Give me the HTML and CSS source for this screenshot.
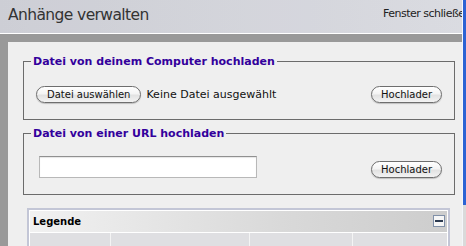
FILE: index.html
```html
<!DOCTYPE html>
<html lang="de">
<head>
<meta charset="utf-8">
<title>Anhänge verwalten</title>
<link rel="stylesheet" href="styles.css">
</head>
<body>
<div class="screen">
  <div class="window">
    <header class="titlebar">
      <h1 class="title">Anhänge verwalten</h1>
      <a class="close" href="#">Fenster schließen</a>
    </header>
    <div class="toolbar"></div>
    <div class="main">
      <div class="rail"></div>
      <div class="content">
        <fieldset class="group group-computer">
          <legend>Datei von deinem Computer hochladen</legend>
          <div class="row">
            <button class="btn btn-choose" type="button">Datei auswählen</button>
            <span class="nofile">Keine Datei ausgewählt</span>
            <button class="btn btn-upload" type="button">Hochlader</button>
          </div>
        </fieldset>
        <fieldset class="group group-url">
          <legend>Datei von einer URL hochladen</legend>
          <div class="row row-url">
            <input class="url" type="text">
            <button class="btn btn-upload" type="button">Hochlader</button>
          </div>
        </fieldset>
        <section class="legend-panel">
          <div class="legend-head">
            <span class="legend-title">Legende</span>
            <span class="collapse"><span class="collapse-bar"></span></span>
          </div>
          <div class="legend-row">
            <div class="cell"></div>
            <div class="cell"></div>
            <div class="cell"></div>
            <div class="cell"></div>
          </div>
        </section>
      </div>
    </div>
  </div>
  <div class="edge"></div>
</div>
</body>
</html>
```
FILE: styles.css
```css
* { box-sizing: border-box; }
html, body { margin: 0; padding: 0; }
body {
  width: 466px;
  height: 246px;
  overflow: hidden;
  background: #efefef;
  font-family: "DejaVu Sans", Verdana, sans-serif;
}
.screen { display: flex; height: 246px; }
.window {
  width: 462px;
  display: flex;
  flex-direction: column;
  overflow: hidden;
}
.titlebar {
  height: 34px;
  flex: none;
  border-bottom: 1px solid #fff;
  display: flex;
  align-items: flex-start;
  background-color: #dedfe5;
  background-image:
    radial-gradient(circle, rgba(150,152,165,.30) 0.6px, transparent 0.8px),
    linear-gradient(to right, #d6d7dd, #e5e6eb);
  background-size: 2px 2px, 100% 100%;
}
.title {
  margin: 0;
  padding: 5px 0 0 8px;
  font-family: "DejaVu Sans", Verdana, sans-serif;
  font-size: 15.5px;
  line-height: 20px;
  font-weight: normal;
  letter-spacing: -0.6px;
  color: #333;
}
.close {
  margin-left: auto;
  width: 79px;
  white-space: nowrap;
  overflow: hidden;
  padding-top: 7px;
  font-size: 11px;
  line-height: 13px;
  letter-spacing: -0.5px;
  color: #222;
  text-decoration: none;
}
.toolbar { height: 8px; flex: none; background: #999; }
.main { flex: 1; display: flex; }
.rail { width: 8px; background: #999; }
.content {
  flex: 1;
  background: #efefef;
  padding: 0 7px 0 15px;
}
.group {
  margin: 12px 0 0;
  padding: 17px 12px 16px;
  border: 1px solid #6b6b6b;
  min-width: 0;
}
.group legend {
  padding: 0 2px;
  margin-left: -5px;
  font-family: "DejaVu Sans", Verdana, sans-serif;
  font-weight: bold;
  font-size: 11px;
  line-height: 15px;
  color: #33009c;
}
.group-url { margin-top: 6px; padding-top: 15px; }
.row { display: flex; align-items: center; }
.row-url { align-items: flex-end; }
.btn {
  appearance: none;
  height: 17px;
  padding: 0 9px;
  font-family: "DejaVu Sans", Verdana, sans-serif;
  font-size: 10px;
  line-height: 14px;
  color: #111;
  border: 1px solid #6e6e6e;
  border-radius: 9px;
  background: linear-gradient(#ffffff, #f4f4f4 45%, #e2e2e2 55%, #f3f3f3);
  box-shadow: 0 1px 1px rgba(0,0,0,.2);
}
.btn-choose { padding: 0 10px; }
.nofile {
  margin-left: 5px;
  font-size: 11px;
  line-height: 13px;
  color: #111;
}
.btn-upload { margin-left: auto; }
.url {
  width: 218px;
  height: 22px;
  margin: 0 0 0 3px;
  border: 1px solid #b8b8b8;
  border-top-color: #909090;
  background: #fff;
  box-shadow: inset 0 1px 1px rgba(0,0,0,.1);
}
.legend-panel {
  margin: 13px 5px 0 4px;
  border: 2px solid #c3c6d6;
  background: #fff;
  padding: 1px;
}
.legend-head {
  height: 22px;
  border-bottom: 1px solid #fff;
  display: flex;
  align-items: center;
  justify-content: space-between;
  padding: 0 2px 0 3px;
  background: linear-gradient(to right, #f1f1f1, #d9d9d9 60%, #cdcdcd);
}
.legend-title {
  font-weight: bold;
  font-size: 10px;
  line-height: 12px;
  color: #000;
}
.collapse {
  width: 12px;
  height: 12px;
  margin-top: -2px;
  border: 1px solid #8090a8;
  background: #f6f6f6;
  display: flex;
  align-items: center;
  justify-content: center;
}
.collapse-bar { width: 8px; height: 2px; background: #2c3a50; }
.legend-row {
  display: grid;
  grid-template-columns: 80px 138px 102px 1fr;
  column-gap: 1px;
  background: #f4f4f4;
}
.cell {
  height: 20px;
  background-color: #d6d6da;
  background-image: radial-gradient(circle, rgba(255,255,255,.45) 0.6px, transparent 0.8px);
  background-size: 2px 2px;
}
.edge {
  width: 4px;
  border-left: 1px solid #f4f6fb;
  background: linear-gradient(to bottom, #2b63d4 0, #2b63d4 205px, #dadada 205px);
}
```
